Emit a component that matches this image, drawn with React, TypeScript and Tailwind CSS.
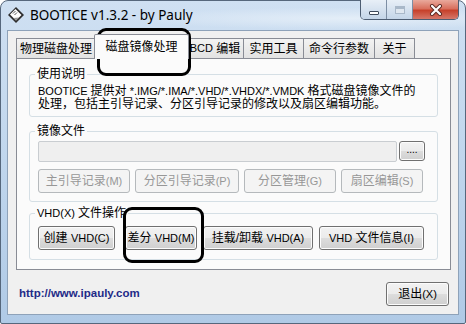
import React from 'react';

const ui = "font-['Liberation_Sans','Noto_Sans_CJK_SC',sans-serif] text-[12px] text-black";

// latin runs are rendered a touch smaller, like Tahoma next to YaHei
const L: React.FC<{ children: React.ReactNode }> = ({ children }) => (
  <span className="text-[11px]">{children}</span>
);

const enabledBtn =
  'flex items-center justify-center h-[24px] rounded-[3px] border border-[#707070] bg-[linear-gradient(#f2f2f2_0%,#ebebeb_50%,#dddddd_50%,#cfcfcf_100%)] shadow-[inset_0_0_0_1px_#fcfcfc] whitespace-nowrap';
const disabledBtn =
  'flex items-center justify-center h-[24px] rounded-[3px] border border-[#b5b9bc] bg-[#f4f4f4] text-[#979797] whitespace-nowrap';

const Group: React.FC<{ title: React.ReactNode; className?: string; children: React.ReactNode }> = ({
  title,
  className,
  children,
}) => (
  <fieldset className={`border border-[#d5dfe5] rounded-[3px] p-0 m-0 min-w-0 ${className ?? ''}`}>
    <legend className="ml-[5px] px-[2px] leading-[16px]">{title}</legend>
    {children}
  </fieldset>
);

const AppIcon = () => (
  <svg width="18" height="18" viewBox="0 0 18 18">
    <path d="M9 1 L17 9 L9 17 L1 9 Z" fill="#2e2e2e" />
    <path d="M8.5 3 L14.5 9 L9 14.5 L3 8.5 Z" fill="#ffffff" />
    <path d="M12 11.5 L14.5 9 L9 14.5 L6.5 12 Z" fill="#9a9a9a" />
    <path d="M6 7.5 L8.5 5 M7.5 9 L10 6.5" stroke="#555" strokeWidth="1" />
  </svg>
);

const TabBtn: React.FC<{ w: string; children: React.ReactNode }> = ({ w, children }) => (
  <div
    className={`${w} h-[20px] -ml-px first:ml-0 flex items-center justify-center border border-b-0 border-[#898c95] bg-linear-to-b from-[#f3f3f3] to-[#e2e2e2] whitespace-nowrap`}
  >
    {children}
  </div>
);

export default function App() {
  return (
    <div className={`${ui} relative w-[466px] h-[324px] overflow-hidden`}>
      <div className="w-full h-full flex flex-col rounded-t-[8px] rounded-b-[2px] border border-[#56677c] bg-linear-to-b from-[#cfe0f2] via-[#c0d6ed] to-[#b0cae6]">
        {/* title bar */}
        <div className="h-[29px] flex items-start bg-[radial-gradient(ellipse_at_75%_60%,#e4eef8_0%,transparent_45%)]">
          <div className="ml-[6px] mt-[5px]">
            <AppIcon />
          </div>
          <div className="ml-[5px] mt-[4px] font-['Noto_Sans',sans-serif] text-[13.5px] leading-[20px] text-black">
            BOOTICE v1.3.2 - by Pauly
          </div>
          <div className="ml-auto mr-[6px] -mt-px flex h-[20px] border border-t-0 border-[#4d5d72] rounded-b-[5px] overflow-hidden">
            <div className="w-[26px] flex items-end justify-center pb-[4px] bg-linear-to-b from-[#e8eff7] to-[#c4d5e8] border-r border-[#7d8ea4]">
              <div className="w-[10px] h-[4px] bg-white border border-[#3e4a5a] rounded-[1px]" />
            </div>
            <div className="w-[26px] flex items-center justify-center bg-linear-to-b from-[#e8eff7] to-[#c4d5e8] border-r border-[#7d8ea4]">
              <div className="w-[10px] h-[8px] border border-[#a9b8c9] bg-[#dfe7f0] shadow-[inset_0_2px_0_#a9b8c9]" />
            </div>
            <div className="w-[45px] flex items-center justify-center bg-[linear-gradient(#e9a99c_0%,#d9705e_45%,#c7412b_55%,#d6786a_100%)]">
              <svg width="14" height="12" viewBox="0 0 14 12">
                <path d="M3 2 L11 10 M11 2 L3 10" stroke="#5a2a24" strokeWidth="4" strokeLinecap="round" />
                <path d="M3 2 L11 10 M11 2 L3 10" stroke="#ffffff" strokeWidth="2.2" strokeLinecap="round" />
              </svg>
            </div>
          </div>
        </div>

        {/* client area */}
        <div className="mx-[6px] h-[285px] border border-[#8ea2b9] bg-[#f0f0f0] flex flex-col pt-[3px]">
          <div className="h-[24px] ml-[8px] flex items-end">
            <TabBtn w="w-[80px]">物理磁盘处理</TabBtn>
            <div className="w-[95px] h-[25px] -mx-[2px] -mb-px relative z-10 flex items-center justify-center border border-b-0 border-[#898c95] bg-[#fbfbfb] rounded-t-[2px] whitespace-nowrap">
              磁盘镜像处理
            </div>
            <TabBtn w="w-[58px]">
              <L>BCD</L>&nbsp;编辑
            </TabBtn>
            <TabBtn w="w-[61px]">实用工具</TabBtn>
            <TabBtn w="w-[72px]">命令行参数</TabBtn>
            <TabBtn w="w-[41px]">关于</TabBtn>
          </div>

          <div className="ml-[8px] mr-[7px] h-[212px] border border-[#898c95] bg-[#fbfbfb] pl-[12px] pr-[12px]">
            <Group title="使用说明" className="mt-[7px]">
              <div className="pl-[8px] pt-[3px] pb-[5px] leading-[13px] whitespace-nowrap">
                <L>BOOTICE </L>提供对<L> *.IMG/*.IMA/*.VHD/*.VHDX/*.VMDK </L>格式磁盘镜像文件的
                <br />
                处理，包括主引导记录、分区引导记录的修改以及扇区编辑功能。
              </div>
            </Group>

            <Group title="镜像文件" className="mt-[6px]">
              <div className="pl-[8px] pr-[9px] pt-[2px] pb-[8px]">
                <div className="flex items-start gap-[2px]">
                  <div className="w-[359px] h-[21px] border border-[#c9cdd1] rounded-[2px] bg-[#efefef]" />
                  <div className={`${enabledBtn} w-[26px] !h-[20px] text-[10px] leading-none pb-[3px]`}>....</div>
                </div>
                <div className="mt-[7px] flex gap-[5px]">
                  <div className={`${disabledBtn} w-[92px]`}>
                    主引导记录<L>(M)</L>
                  </div>
                  <div className={`${disabledBtn} w-[104px]`}>
                    分区引导记录<L>(P)</L>
                  </div>
                  <div className={`${disabledBtn} w-[92px]`}>
                    分区管理<L>(G)</L>
                  </div>
                  <div className={`${disabledBtn} w-[82px]`}>
                    扇区编辑<L>(S)</L>
                  </div>
                </div>
              </div>
            </Group>

            <Group
              title={
                <>
                  <L>VHD(X) </L>文件操作
                </>
              }
              className="mt-[3px]"
            >
              <div className="pl-[8px] pt-[5px] pb-[9px] flex">
                <div className={`${enabledBtn} w-[77px]`}>
                  创建&nbsp;<L>VHD(C)</L>
                </div>
                <div className={`${enabledBtn} w-[72px] ml-[10px]`}>
                  差分&nbsp;<L>VHD(M)</L>
                </div>
                <div className={`${enabledBtn} w-[110px] ml-[6px]`}>
                  挂载/卸载&nbsp;<L>VHD(A)</L>
                </div>
                <div className={`${enabledBtn} w-[105px] ml-[6px]`}>
                  <L>VHD </L>&nbsp;文件信息<L>(I)</L>
                </div>
              </div>
            </Group>
          </div>

          <div className="flex-1 flex items-center justify-between pl-[11px] pr-[9px] pt-[4px]">
            <span className="font-['Liberation_Sans',sans-serif] font-bold text-[11.5px] text-[#1f2b88]">
              http://www.ipauly.com
            </span>
            <div className={`${enabledBtn} w-[63px]`}>
              退出<L>(X)</L>
            </div>
          </div>
        </div>
        <div className="flex-1" />
      </div>

      {/* annotation marks drawn over the screenshot */}
      <div className="absolute left-[97px] top-[28px] w-[94px] h-[48px] border-[3px] border-black rounded-[9px]" />
      <div className="absolute left-[123px] top-[207px] w-[81px] h-[56px] border-[3px] border-black rounded-[9px]" />
    </div>
  );
}
